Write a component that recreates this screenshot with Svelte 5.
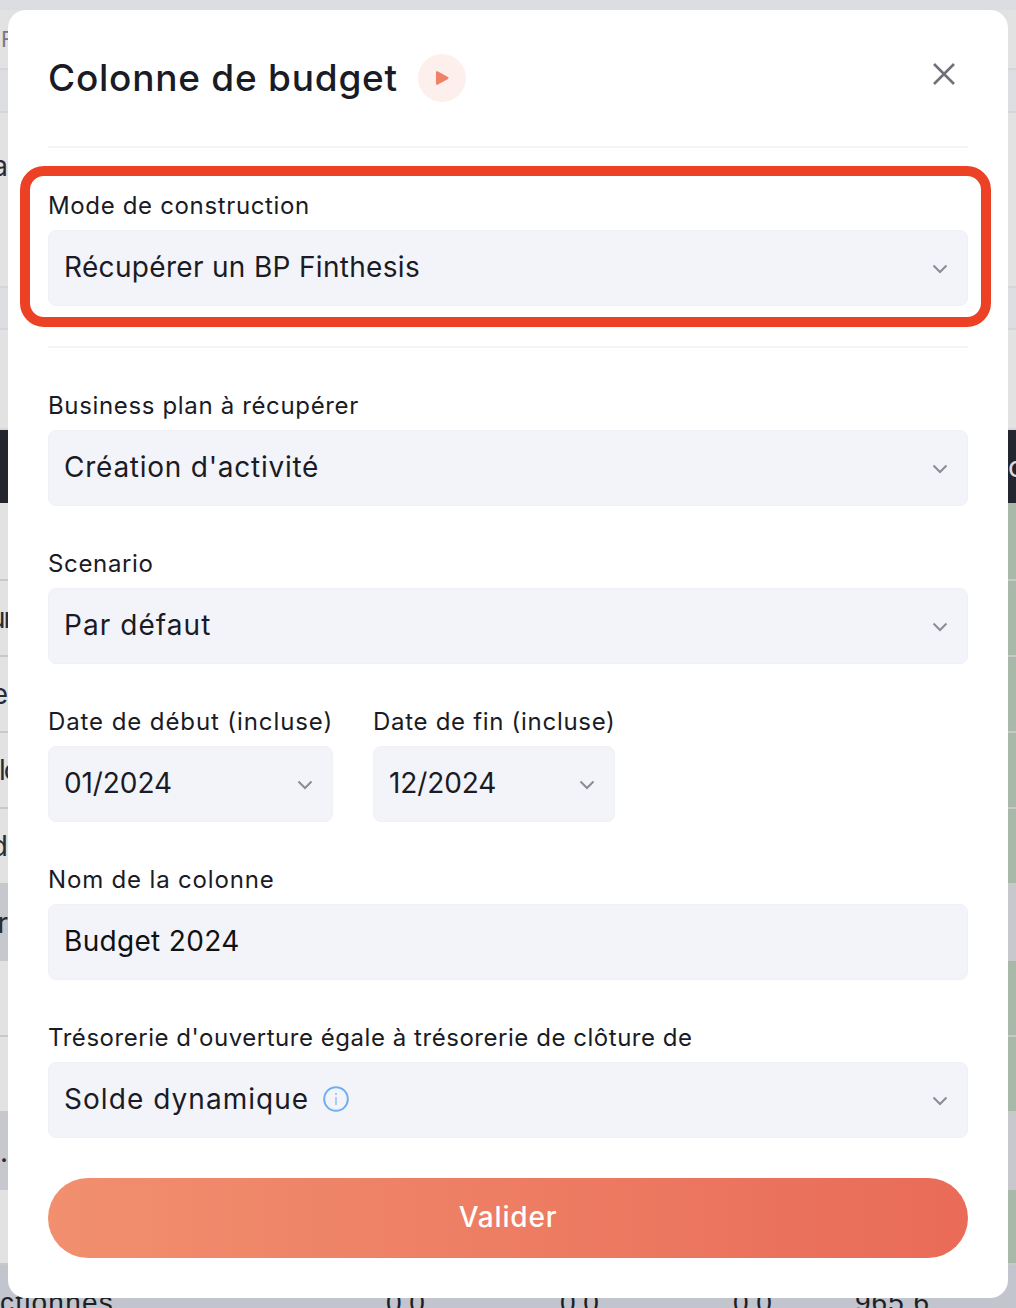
<script>
	const rows = [
		{ h: 10, cls: 'top' },
		{ h: 60, cls: 'pale first', left: 'F' },
		{ h: 43, cls: 'mid' },
		{ h: 105, cls: 'pale noline', left: 'a' },
		{ h: 70, cls: 'pale' },
		{ h: 42, cls: 'mid' },
		{ h: 100, cls: 'pale' },
		{ h: 73, cls: 'dark', right: 'c' },
		{ h: 78, cls: 'pale green' },
		{ h: 76, cls: 'pale green', left: 'ur', off: -11 },
		{ h: 76, cls: 'pale green', left: 'e' },
		{ h: 76, cls: 'pale green', left: 'lc', off: -1 },
		{ h: 76, cls: 'pale green', left: 'd' },
		{ h: 76, cls: 'grey-row', left: 'r' },
		{ h: 76, cls: 'pale green' },
		{ h: 76, cls: 'pale green' },
		{ h: 77, cls: 'grey-row', left: '.' },
		{ h: 75, cls: 'pale green' }
	];

	const dates = [
		{ label: 'Date de début (incluse)', value: '01/2024', cls: 'start' },
		{ label: 'Date de fin (incluse)', value: '12/2024', cls: 'end' }
	];
</script>

{#snippet chevron()}
	<svg class="chevron" width="16" height="10" viewBox="0 0 16 10" fill="none">
		<path d="M1.5 1.500 8 8l6.500-6.500" stroke="#8b8c94" stroke-width="2" />
	</svg>
{/snippet}

{#snippet select(value, cls = '')}
	<div class="select {cls}">
		<span>{value}</span>
		{@render chevron()}
	</div>
{/snippet}

<div class="page">
	<div class="backdrop">
		{#each rows as row}
			<div class="row {row.cls}" style="height: {row.h}px">
				<span class="edge" class:clip={row.off !== undefined}>
					<span style={row.off !== undefined ? `margin-left: ${row.off}px` : undefined}>{row.left ?? ''}</span>
				</span>
				<span class="edge">{row.right ?? ''}</span>
			</div>
		{/each}
		<div class="row last">
			<span class="name">ctionnes</span>
			<span class="num a">0,0</span>
			<span class="num b">0,0</span>
			<span class="num c">0,0</span>
			<span class="num d">965,6</span>
		</div>
	</div>

	<div class="modal">
		<header>
			<h2>Colonne de budget</h2>
			<span class="play">
				<svg width="16" height="16" viewBox="0 0 16 16">
					<path d="M2 2.200c0-.9.8-1.300 1.500-.9l10.500 5.800c.7.400.7 1.400 0 1.800L3.500 14.700c-.7.400-1.500-.1-1.500-.9z" fill="#f08068" />
				</svg>
			</span>
			<svg class="close" width="24" height="24" viewBox="0 0 24 24" fill="none">
				<path d="M2 2l20 20M22 2 2 22" stroke="#6f7079" stroke-width="2.600" />
			</svg>
		</header>

		<section class="group">
			<label for="mode">Mode de construction</label>
			{@render select('Récupérer un BP Finthesis', 'tight')}
		</section>

		<section class="fields">
			<div class="field">
				<label for="bp">Business plan à récupérer</label>
				{@render select("Création d'activité")}
			</div>
			<div class="field">
				<label for="scenario">Scenario</label>
				{@render select('Par défaut', 'wide')}
			</div>
			<div class="dates">
				{#each dates as d}
					<div class="field {d.cls}">
						<label for={d.cls}>{d.label}</label>
						{@render select(d.value)}
					</div>
				{/each}
			</div>
			<div class="field">
				<label class="roomy" for="name">Nom de la colonne</label>
				<div class="select tight input"><span>Budget 2024</span></div>
			</div>
			<div class="field">
				<label class="narrow" for="opening">Trésorerie d'ouverture égale à trésorerie de clôture de</label>
				<div class="select wide">
					<span class="with-info">
						Solde dynamique
						<svg width="26" height="26" viewBox="0 0 26 26" fill="none">
							<circle cx="13" cy="13" r="11.800" stroke="#6fadf2" stroke-width="2" />
							<path d="M13 11v8M13 7v2" stroke="#8fbdf0" stroke-width="1.500" />
						</svg>
					</span>
					{@render chevron()}
				</div>
			</div>
		</section>

		<button>Valider</button>

		<div class="highlight"></div>
	</div>
</div>

<style>
	:global(body) {
		margin: 0;
		background: #dcdde2;
	}
	.page {
		position: relative;
		width: 1016px;
		height: 1308px;
		overflow: hidden;
		font-family: Inter, 'Liberation Sans', sans-serif;
		color: #1a1b25;
	}
	.row {
		display: flex;
		justify-content: space-between;
		box-sizing: border-box;
		align-items: center;
		border-bottom: 2px solid #d6d6d8;
		font-size: 28px;
		overflow: hidden;
	}
	.top { background: #dcdde2; border-bottom: 0; }
	.pale { background: #e2e2e3; }
	.noline { border-bottom: 0; }
	.mid { background: #dddee2; }
	.green { background: linear-gradient(90deg, #e2e2e3 50%, #a9b9a9 50%); border-bottom-color: #c4cbc4; }
	.dark { background: #24262f; color: #dcdde2; border-bottom: 0; }
	.grey-row { background: #c6c8ce; border-bottom: 0; }
	.edge {
		width: 8px;
		display: flex;
		justify-content: flex-end;
		overflow: hidden;
		color: #2b2c33;
	}
	.edge.clip { justify-content: flex-start; letter-spacing: -2px; }
	.dark .edge { justify-content: flex-start; color: #dcdde2; }
	.first .edge { justify-content: flex-start; color: #77787f; font-size: 22px; padding-left: 1px; }
	.last {
		display: block;
		position: relative;
		height: 60px;
		background: #c2c5cd;
		border: 0;
		color: #1e1f26;
		font-size: 28px;
	}
	.name, .num {
		position: absolute;
		top: 23px;
		line-height: 30px;
		white-space: nowrap;
		font-family: 'Liberation Sans', sans-serif;
	}
	.name { left: 0; letter-spacing: 1.2px; }
	.num.a { left: 386px; }
	.num.b { left: 560px; }
	.num.c { left: 733px; }
	.num.d { left: 855px; letter-spacing: 1px; }

	.modal {
		position: absolute;
		top: 10px;
		left: 8px;
		width: 1000px;
		height: 1288px;
		box-sizing: border-box;
		padding: 0 40px;
		background: #fff;
		border-radius: 18px;
	}
	header {
		display: flex;
		align-items: center;
		height: 138px;
		box-sizing: border-box;
		border-bottom: 2px solid #f3f3f8;
	}
	h2 {
		margin: 0;
		font-size: 37px;
		line-height: 48px;
		font-weight: 500;
		letter-spacing: 0.76px;
		white-space: nowrap;
	}
	.play {
		display: flex;
		align-items: center;
		justify-content: center;
		width: 48px;
		height: 48px;
		margin-left: 20px;
		border-radius: 50%;
		background: #fdf0ec;
	}
	.close {
		margin-left: auto;
		margin-right: 12px;
		margin-top: -8px;
		width: 24px;
		height: 24px;
	}
	.group {
		padding: 40px 0;
		border-bottom: 2px solid #f3f3f8;
	}
	.fields {
		padding-top: 40px;
		display: flex;
		flex-direction: column;
		gap: 40px;
	}
	label {
		display: block;
		font-size: 24px;
		line-height: 36px;
		margin-bottom: 6px;
		letter-spacing: 0.65px;
		white-space: nowrap;
	}
	label.roomy { letter-spacing: 0.83px; }
	label.narrow { letter-spacing: 0.54px; }
	.start label { letter-spacing: 0.9px; }
	.end label { letter-spacing: 0.7px; }
	.select {
		display: flex;
		align-items: center;
		justify-content: space-between;
		box-sizing: border-box;
		height: 76px;
		padding: 0 19px 0 15px;
		background: #f3f4f9;
		border: 1px solid #f0f1f6;
		border-radius: 8px;
		font-size: 28px;
		letter-spacing: 0.75px;
		white-space: nowrap;
	}
	.select > span { margin-top: -2px; }
	.select.tight { letter-spacing: 0.32px; }
	.select.wide { letter-spacing: 1.05px; }
	.dates .select { letter-spacing: -0.1px; }
	.chevron { margin-top: 2px; }
	.input { color: #111; }
	.with-info {
		display: flex;
		align-items: center;
		gap: 14px;
	}
	.dates {
		display: flex;
		gap: 40px;
	}
	.start { width: 285px; }
	.end { width: 242px; }
	button {
		display: block;
		width: 100%;
		height: 80px;
		margin-top: 40px;
		padding: 0 0 2px;
		border: 0;
		border-radius: 40px;
		background: linear-gradient(90deg, #f18f6e, #e96b58);
		color: #fff;
		font: 500 28px Inter, 'Liberation Sans', sans-serif;
		letter-spacing: 0.8px;
	}
	.highlight {
		position: absolute;
		top: 156px;
		left: 12px;
		width: 971px;
		height: 161px;
		box-sizing: border-box;
		border: 10px solid #ec4125;
		border-radius: 24px;
		pointer-events: none;
	}
</style>
